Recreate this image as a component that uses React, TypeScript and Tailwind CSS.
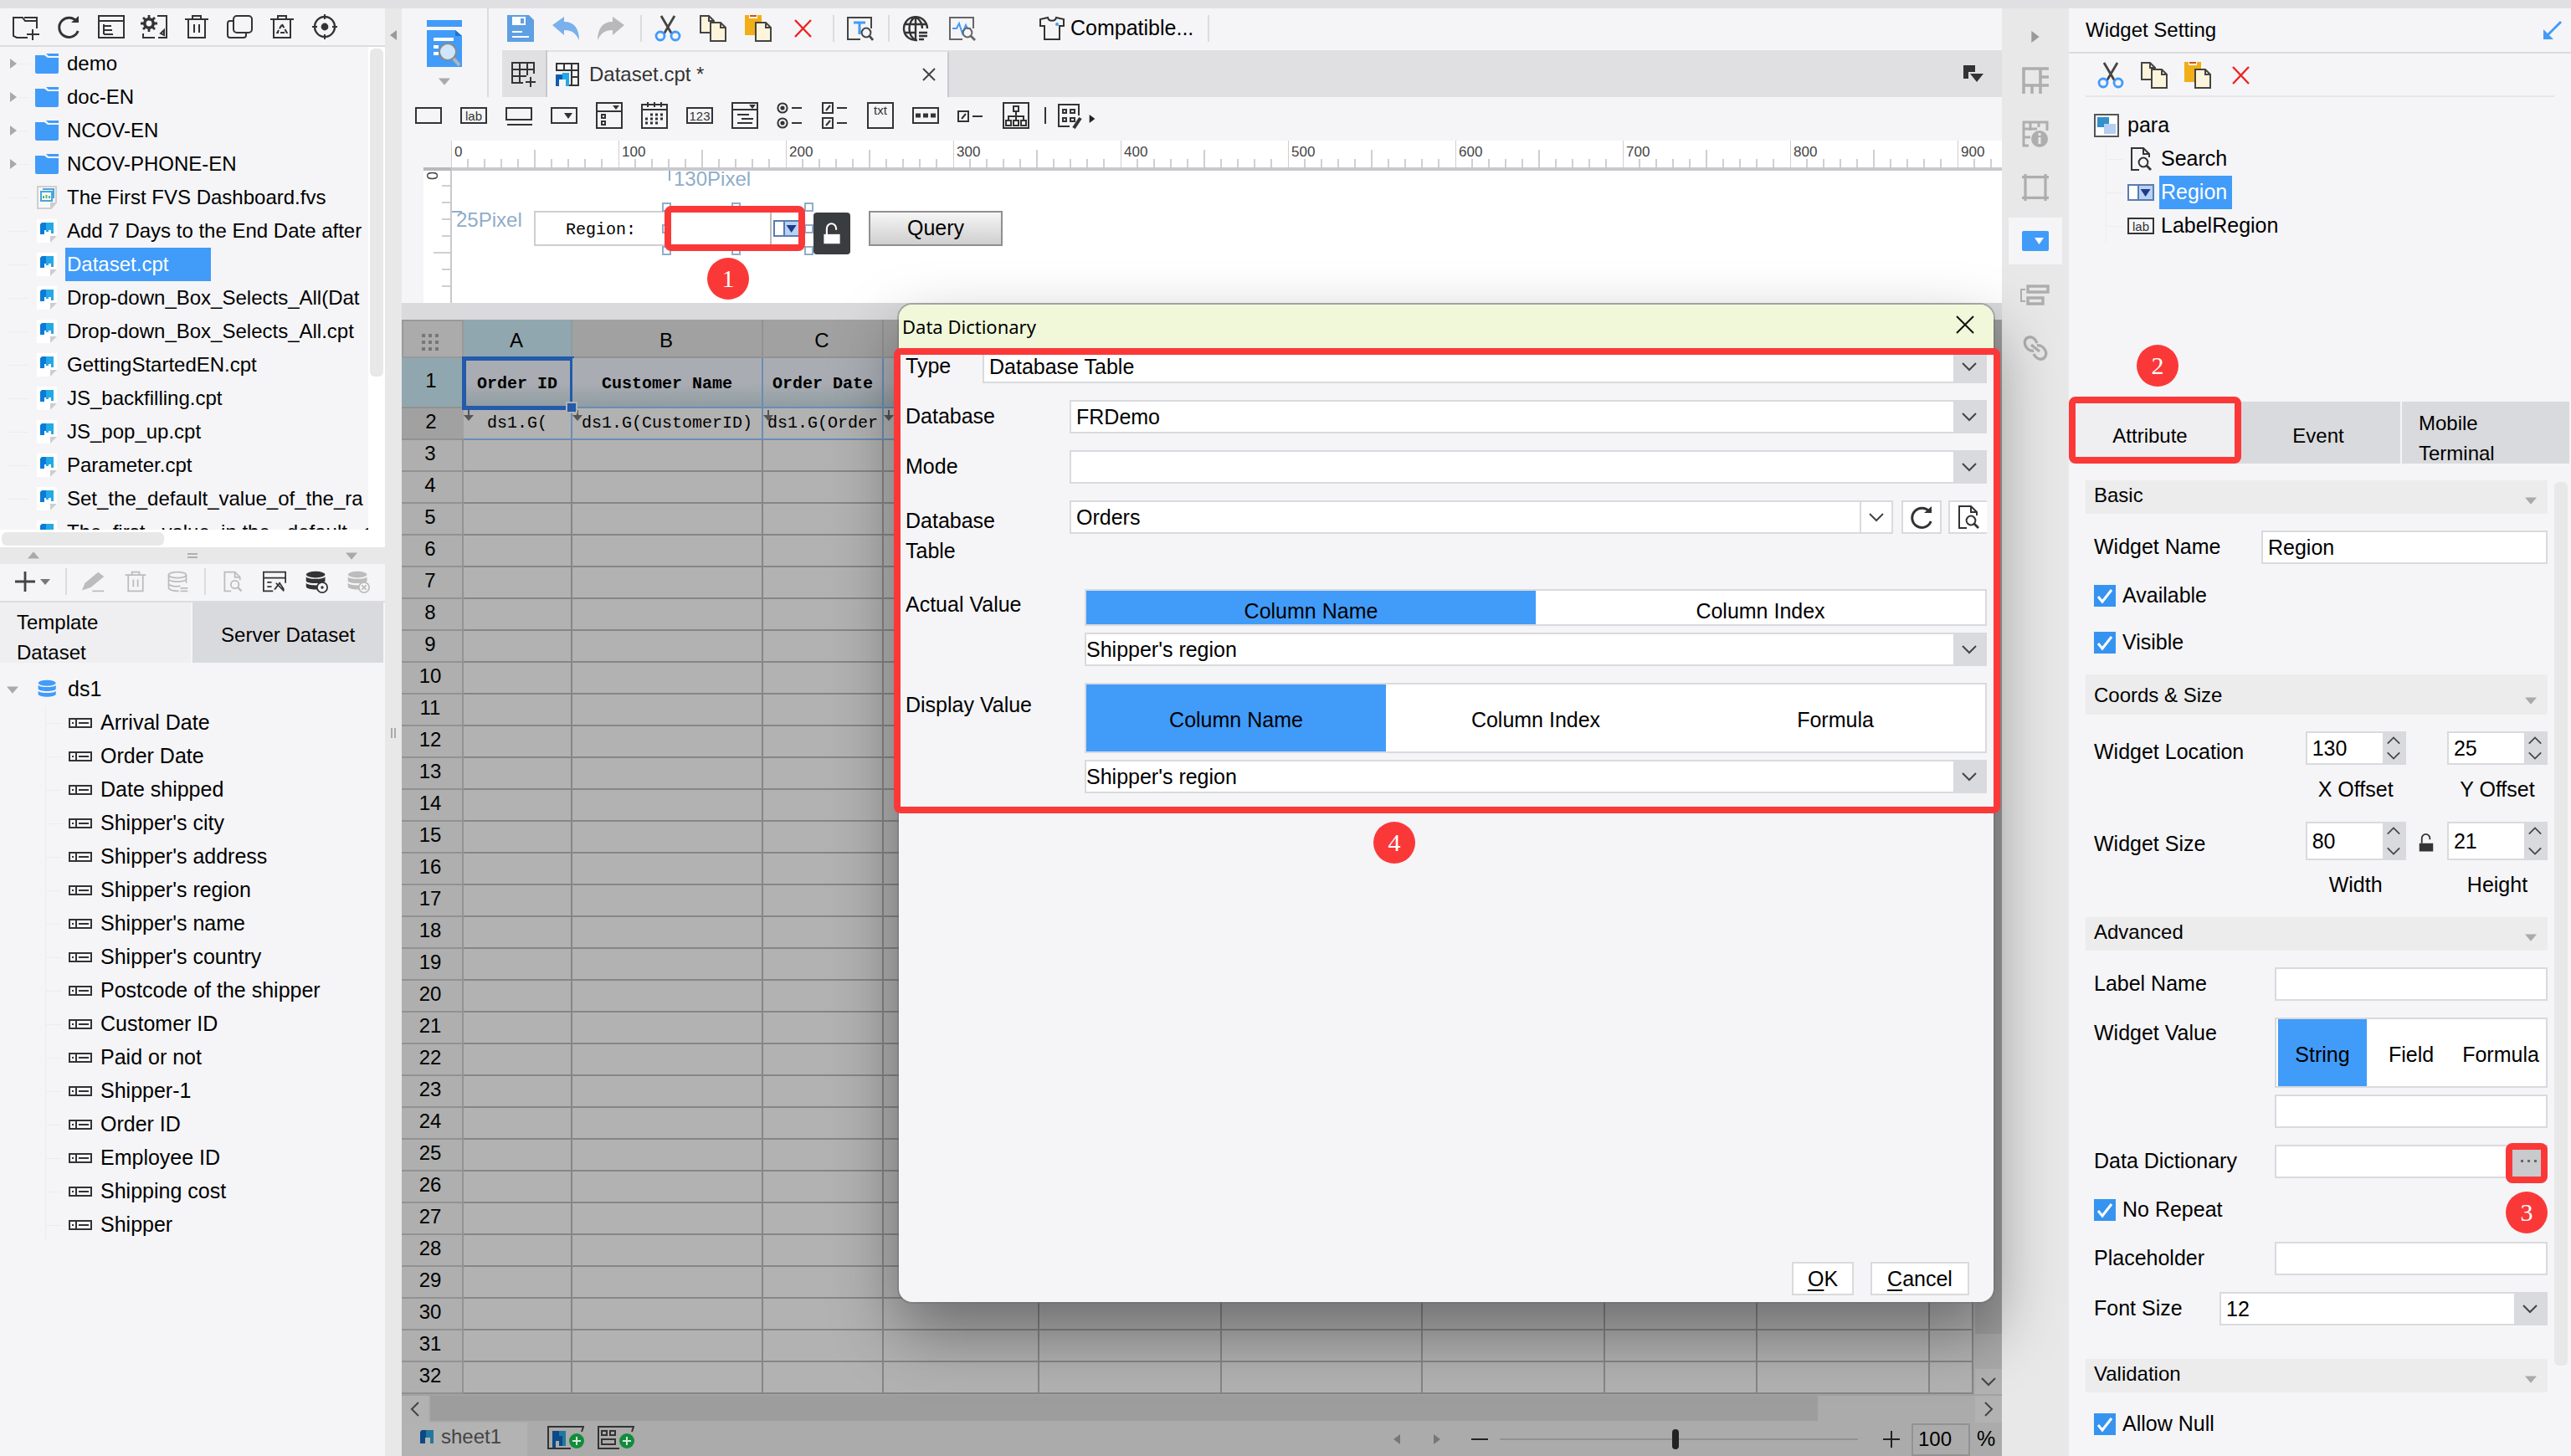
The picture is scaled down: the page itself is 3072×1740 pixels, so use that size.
import React, { ReactNode } from "react";

/* ---------- icons ---------- */

type IcoProps = { children: ReactNode; className?: string; vb?: string };

function Ico({ children, className = "w-8 h-8 text-[#333]", vb = "0 0 16 16" }: IcoProps) {
  return (
    <svg viewBox={vb} className={`${className} shrink-0`} fill="none" stroke="currentColor" strokeWidth="1" aria-hidden="true">
      {children}
    </svg>
  );
}

const fill = { fill: "currentColor", stroke: "none" };

const RefreshIcon = ({ className }: { className?: string }) => (
  <Ico className={className}>
    <path d="M13 5.2A5.8 5.8 0 1 0 13.6 10.5" strokeWidth="1.5" />
    <path d="M9.5 5.5h4.5V1.5z" {...fill} />
  </Ico>
);

const TrashIcon = ({ className, inner }: { className?: string; inner?: ReactNode }) => (
  <Ico className={className}>
    <path d="M1 3.5h14M5.5 3.5v-2h5v2M3 3.5v11h10v-11" />
    {inner ?? <path d="M6.5 6.5v5M9.5 6.5v5" />}
  </Ico>
);

const ScissorsIcon = () => (
  <Ico className="w-8 h-8">
    <path d="M4 .5 10.2 11M12 .5 5.800 11" stroke="#444" strokeWidth="1.4" />
    <circle cx="3.500" cy="12.500" r="2.500" stroke="#419bf9" strokeWidth="1.400" />
    <circle cx="12.500" cy="12.500" r="2.500" stroke="#419bf9" strokeWidth="1.400" />
  </Ico>
);

const CopyIcon = () => (
  <Ico className="w-8 h-8">
    <path d="M.5.5h5l3 3v7h-8z" fill="#fdf4dc" stroke="#444" />
    <path d="M5.500.5v3h3" stroke="#444" />
    <path d="M6.500 4.500h6l3 3v8h-9z" fill="#fdf4dc" stroke="#444" />
    <path d="M12.500 4.500v3h3" stroke="#444" />
  </Ico>
);

const PasteIcon = () => (
  <Ico className="w-8 h-8">
    <path d="M0 0h10v12H0z" fill="#f2ae16" stroke="none" />
    <path d="M2.500 0h5v2h-5z" fill="#fff" stroke="none" />
    <path d="M3 0h4v1H3z" fill="#c4561c" stroke="none" />
    <path d="M6.500 4.500h6l3 3v8h-9z" fill="#fdf4dc" stroke="#444" />
    <path d="M12.500 4.500v3h3" stroke="#444" />
  </Ico>
);

const DeleteIcon = () => (
  <Ico className="w-8 h-8 text-[#ee2222]">
    <path d="M3 3l9.500 10M12.500 3l-9.500 10" strokeWidth="1.200" />
  </Ico>
);

const PageSearchIcon = ({ className }: { className?: string }) => (
  <Ico className={className}>
    <path d="M7 14.500H2.500v-13h7l3.500 3.500v2M9.500 1.500v3.500H13" />
    <circle cx="9.500" cy="10" r="2.700" />
    <path d="M11.500 12l2.500 2.500" strokeWidth="1.400" />
  </Ico>
);

const LabIcon = ({ label = "lab" }: { label?: string }) => (
  <Ico>
    <path d="M.5 3.500h15v9H.5z" />
    <text x="8" y="10.800" textAnchor="middle" fontSize="7.500" fontFamily="Liberation Sans, sans-serif" {...fill}>{label}</text>
  </Ico>
);

const ComboIcon = () => (
  <Ico className="w-8 h-8">
    <path d="M.5 3.500h15v9H.5z" fill="#fff" stroke="#5b7bb0" />
    <path d="M6.500 4h8.500v8H6.500z" fill="#b7d3f3" stroke="none" />
    <path d="M6.500 3.500v9" stroke="#5b7bb0" />
    <path d="M7.800 6h6L10.800 10.500z" fill="#1f3a8a" stroke="none" />
  </Ico>
);

const UnlockIcon = ({ className }: { className?: string }) => (
  <Ico className={className}>
    <path d="M2.500 8.500h11v6.500h-11z" {...fill} />
    <path d="M4.500 8.500V4.500a3.200 3.200 0 0 1 6.400 0v1" strokeWidth="1.200" />
  </Ico>
);

const FolderIcon = () => (
  <svg viewBox="0 0 28 24" className="h-6 w-7 shrink-0" aria-hidden="true">
    <path d="M0 2h11l4 3h13v17a2 2 0 0 1-2 2H2a2 2 0 0 1-2-2z" fill="#419bf9" />
    <path d="M13 0h15v3H16z" fill="#419bf9" />
  </svg>
);

const CptIcon = () => (
  <svg viewBox="0 0 24 28" className="h-7 w-6 shrink-0" aria-hidden="true">
    <path d="M0 0h24v20l-8 8H0z" fill="#fff" />
    <path d="M16 20h8l-8 8z" fill="#cdcdcd" />
    <path d="M6 4h6v5h2v4H9v5H4V6z" fill="#0a7bd8" />
    <path d="M11 4h9v13h-3v-4h-3v2h-3V9z" fill="#25a9e6" />
  </svg>
);

const FvsIcon = () => (
  <svg viewBox="0 0 24 28" className="h-7 w-6 shrink-0" aria-hidden="true">
    <path d="M1 1h22v19l-6 7H1z" fill="#f8f8f8" stroke="#cfcfcf" strokeWidth="2" />
    <path d="M5 7h13v11H5zM7 4h13v11" fill="none" stroke="#4aa5de" strokeWidth="2" />
    <path d="M8 15v-3M11.500 15v-4M15 15v-3" stroke="#5fb560" strokeWidth="2" />
    <path d="M16 20h8l-8 8z" fill="#cdcdcd" />
  </svg>
);

const DbIcon = ({ className, mark }: { className?: string; mark?: ReactNode }) => (
  <Ico className={className}>
    <ellipse cx="7.500" cy="3.200" rx="6.500" ry="2.200" {...fill} />
    <path d="M1 4.700c1 2 12 2 13 0v3c-1 2-12 2-13 0zM1 9c1 2 12 2 13 0v2.500c-1 2.500-12 2.500-13 0z" {...fill} />
    {mark}
  </Ico>
);

const FieldIcon = () => (
  <svg viewBox="0 0 28 12" className="h-3 w-7 shrink-0" fill="none" stroke="#333" strokeWidth="2" aria-hidden="true">
    <path d="M1 1h26v10H1zM9 1v10M12 6h12M4 6h2" />
  </svg>
);

const Tri = ({ dir, className = "w-3 h-3 text-[#a9a9a9]" }: { dir: "l" | "r" | "u" | "d"; className?: string }) => {
  const d = { l: "M10 0v12L2 6z", r: "M2 0v12l8-6z", u: "M0 9h12L6 2z", d: "M0 3h12l-6 7z" }[dir];
  return (
    <svg viewBox="0 0 12 12" className={`${className} shrink-0`} fill="currentColor" aria-hidden="true">
      <path d={d} />
    </svg>
  );
};

const Chevron = ({ up, className = "w-5 h-5" }: { up?: boolean; className?: string }) => (
  <svg viewBox="0 0 20 20" className={`${className} shrink-0 text-[#444]`} fill="none" stroke="currentColor" strokeWidth="2" aria-hidden="true">
    <path d={up ? "M2 14l8-8 8 8" : "M2 6l8 8 8-8"} />
  </svg>
);

/* ---------- shared parts ---------- */

const Btn = ({ label, children, className = "" }: { label: string; children: ReactNode; className?: string }) => (
  <button type="button" aria-label={label} className={`flex shrink-0 items-center justify-center ${className}`}>
    {children}
  </button>
);

const Divider = ({ className = "" }: { className?: string }) => <span className={`h-8 w-0.5 shrink-0 bg-[#dcdcde] ${className}`} />;

const Badge = ({ n, className }: { n: number; className: string }) => (
  <span className={`absolute z-30 flex h-[50px] w-[50px] items-center justify-center rounded-full bg-[#fb3838] font-[Liberation_Serif,serif] text-[30px] leading-none text-white ${className}`}>
    {n}
  </span>
);

const RedBox = ({ className }: { className: string }) => (
  <span className={`pointer-events-none absolute z-20 rounded-lg border-8 border-[#fb3838] ${className}`} />
);

function Select({ id, value, pad = "pl-1.5", className = "", plain = false }: { id: string; value: string; pad?: string; className?: string; plain?: boolean }) {
  return (
    <span className={`flex h-10 min-w-0 border-2 border-[#d9dadd] bg-white ${className}`}>
      <select id={id} aria-label={id} defaultValue={value} className={`h-full min-w-0 flex-1 appearance-none bg-transparent outline-none ${pad}`}>
        <option>{value}</option>
      </select>
      <span className={`pointer-events-none flex w-[38px] shrink-0 items-center justify-center ${plain ? "border-l-2 border-[#d9dadd]" : "bg-[#d9dadd]"}`}>
        <Chevron />
      </span>
    </span>
  );
}

/* ---------- left column ---------- */

const files: [string, "dir" | "fvs" | "cpt"][] = [
  ["demo", "dir"],
  ["doc-EN", "dir"],
  ["NCOV-EN", "dir"],
  ["NCOV-PHONE-EN", "dir"],
  ["The First FVS Dashboard.fvs", "fvs"],
  ["Add 7 Days to the End Date after I", "cpt"],
  ["Dataset.cpt", "cpt"],
  ["Drop-down_Box_Selects_All(Dat", "cpt"],
  ["Drop-down_Box_Selects_All.cpt", "cpt"],
  ["GettingStartedEN.cpt", "cpt"],
  ["JS_backfilling.cpt", "cpt"],
  ["JS_pop_up.cpt", "cpt"],
  ["Parameter.cpt", "cpt"],
  ["Set_the_default_value_of_the_ra", "cpt"],
  ["The_first_ value_in the_ default_ s", "cpt"],
];

const fields = [
  "Arrival Date", "Order Date", "Date shipped", "Shipper's city", "Shipper's address", "Shipper's region",
  "Shipper's name", "Shipper's country", "Postcode of the shipper", "Customer ID", "Paid or not", "Shipper-1",
  "Order ID", "Employee ID", "Shipping cost", "Shipper",
];

function LeftColumn() {
  return (
    <aside className="flex w-[460px] shrink-0 flex-col bg-[#f5f5f7]">
      <div className="flex h-[46px] shrink-0 items-center gap-[19px] border-b-2 border-[#dcdcde] pl-[15px]">
        <Btn label="New folder">
          <Ico>
            <path d="M9 14.500H2.500l-2-1v-11h5.500l1.500 2h7V9M7 2.500h7.500v2M12 9.500v6.500M8.500 12.500H16" />
          </Ico>
        </Btn>
        <Btn label="Refresh"><RefreshIcon /></Btn>
        <Btn label="Template list">
          <Ico>
            <path d="M.5 1.500h15v13H.5zM.5 4.500h15M3.500 6.500v6M3.500 7.500H8M3.500 10h5M3.500 12.500H9" />
          </Ico>
        </Btn>
        <Btn label="Settings">
          <Ico>
            <circle cx="5" cy="6" r="2.600" strokeWidth="1.800" />
            <path d="M5 1v2M5 9v2M0 6h2M8 6h2M1.500 2.500l1.300 1.300M8.500 2.500L7.200 3.800M1.500 9.500l1.300-1.300M8.500 9.500L7.200 8.200" strokeWidth="1.400" />
            <path d="M10 1.500h5.500v13h-5M1.500 12v2.500h7M12 12l2-2v3z" />
          </Ico>
        </Btn>
        <Btn label="Delete"><TrashIcon /></Btn>
        <Btn label="Copy">
          <Ico>
            <rect x="4.500" y="1.500" width="11" height="10" rx="2" />
            <path d="M4 4.500H2.500a1.500 1.500 0 0 0-1.500 1.500v7a1.500 1.500 0 0 0 1.500 1.500h8a1.500 1.500 0 0 0 1.500-1.500v-1" />
          </Ico>
        </Btn>
        <Btn label="Recycle bin"><TrashIcon inner={<path d="M8 6.500l2.800 5H5.200z" strokeDasharray="2.500 1" />} /></Btn>
        <Btn label="Locate">
          <Ico>
            <circle cx="8" cy="8" r="6" strokeWidth="1.200" />
            <circle cx="8" cy="8" r="2.200" {...fill} />
            <path d="M8 .5v3M8 12.500v3M.5 8h3M12.500 8h3" />
          </Ico>
        </Btn>
      </div>

      <div className="flex h-[577px] shrink-0 text-[24px]">
        <ul className="min-w-0 flex-1 overflow-hidden">
          {files.map(([name, kind]) => (
            <li key={name} className="flex h-10 items-center whitespace-nowrap">
              <span className="flex w-[42px] shrink-0 items-center pl-2.5">
                {kind === "dir" && <Tri dir="r" />}
                <span className="h-px flex-1 bg-[#ececef]" />
                <span className="w-2" />
              </span>
              <span className="flex w-7 shrink-0 justify-center">
                {kind === "dir" ? <FolderIcon /> : kind === "fvs" ? <FvsIcon /> : <CptIcon />}
              </span>
              <span className={name === "Dataset.cpt" ? "ml-2 flex h-10 w-[174px] shrink-0 items-center bg-[#419bf9] pl-0.5 text-white" : "ml-2 pl-0.5"}>{name}</span>
            </li>
          ))}
        </ul>
        <div className="w-5 shrink-0 bg-white px-0.5 pt-0.5">
          <div className="h-[392px] rounded-md bg-[#e8e8e8]" />
        </div>
      </div>
      <div className="flex h-[21px] shrink-0 items-center bg-white pl-0.5">
        <div className="h-4 w-[194px] rounded-md bg-[#e8e8e8]" />
      </div>

      <div className="flex h-5 shrink-0 items-center justify-between bg-[#e8e8e8] px-[31px]">
        <Tri dir="u" className="h-3.5 w-[18px] text-[#a9a9a9]" />
        <span className="h-1.5 w-3 border-y-2 border-[#b0b0b0]" />
        <Tri dir="d" className="h-3.5 w-[18px] text-[#a9a9a9]" />
      </div>

      <div className="flex h-[46px] shrink-0 items-center gap-[22px] border-b-2 border-[#dcdcde] pb-0.5 pl-[14px]">
        <Btn label="Add dataset" className="gap-0.5">
          <Ico className="h-8 w-8 text-[#444]"><path d="M8 2v12M2 8h12" strokeWidth="1.400" /></Ico>
          <Tri dir="d" className="h-3 w-3 text-[#777]" />
        </Btn>
        <Divider className="-mx-1" />
        <Btn label="Edit">
          <Ico className="h-7 w-7 text-[#bcbcbc]"><path d="M0 14l2-5 9-7.500 4 3L6 12z" {...fill} /><path d="M7 14.500h8" /></Ico>
        </Btn>
        <Btn label="Remove"><TrashIcon className="h-7 w-7 text-[#bcbcbc]" /></Btn>
        <Btn label="Dataset">
          <Ico className="h-7 w-7 text-[#bcbcbc]">
            <ellipse cx="8" cy="3.500" rx="6" ry="2" />
            <path d="M2 3.500v9c1 2 5 2 7 2M14 3.500V9M2 6.500c1 2 11 2 12 0M2 9.500c1 2 6 2 8 1.500M10 12.500h5M10 14.500h5" />
          </Ico>
        </Btn>
        <Divider className="-mx-1" />
        <Btn label="Preview dataset"><PageSearchIcon className="h-7 w-7 text-[#bcbcbc]" /></Btn>
        <Btn label="Link dataset">
          <Ico className="h-7 w-7 text-[#333]">
            <path d="M7 14.500H.5v-13h15V9M.5 5.500h15M3 8.500h3M3 11.500h3M8 13.500l3.500-4.500 3 4.500M9 9l5.500 5.500" />
          </Ico>
        </Btn>
        <Btn label="Server data">
          <DbIcon className="h-7 w-7 text-[#333]" mark={<><circle cx="12" cy="12" r="3.500" fill="#f5f5f7" /><circle cx="12" cy="12" r="1" {...fill} /></>} />
        </Btn>
        <Btn label="Clear data">
          <DbIcon className="h-7 w-7 text-[#bcbcbc]" mark={<><circle cx="12" cy="12" r="3.500" fill="#f5f5f7" /><path d="M10.500 10.500l3 3M13.500 10.500l-3 3" /></>} />
        </Btn>
      </div>

      <div className="flex h-[72px] shrink-0 gap-0.5 pr-0.5 text-[24px]" role="tablist">
        <button type="button" role="tab" className="w-1/2 bg-[#efeff1] pl-5 pr-20 pt-1.5 text-left leading-9">Template Dataset</button>
        <button type="button" role="tab" className="w-1/2 bg-[#d9dadd] pt-1.5">Server Dataset</button>
      </div>

      <div className="pt-3">
        <div className="flex h-10 items-center">
          <span className="w-11 pl-2"><Tri dir="d" className="h-3.5 w-3.5 text-[#a9a9a9]" /></span>
          <DbIcon className="h-7 w-[26px] text-[#419bf9]" />
          <span className="pl-[11px]">ds1</span>
        </div>
        <ul className="ml-[54px] border-l border-[#ececef]">
          {fields.map((f) => (
            <li key={f} className="flex h-10 items-center whitespace-nowrap">
              <span className="mr-2 h-px w-[19px] bg-[#ececef]" />
              <FieldIcon />
              <span className="pl-2.5">{f}</span>
            </li>
          ))}
        </ul>
      </div>
    </aside>
  );
}

function Splitter() {
  return (
    <div className="flex w-5 shrink-0 flex-col items-center bg-[#e8e8e8] pt-6">
      <Tri dir="l" className="h-4 w-3 text-[#999]" />
      <span className="mt-[820px] h-3 w-1.5 border-x-2 border-[#aaa]" />
    </div>
  );
}

/* ---------- centre column ---------- */

function MainToolbar() {
  return (
    <div className="flex h-[50px] shrink-0 items-center pb-0.5 pl-1.5">
      <Btn label="Save">
        <Ico className="h-8 w-8"><path d="M0 0h13l3 3v13H0z" fill="#5f9fe3" stroke="none" /><path d="M3 1h8v5H3zM3 9.500h6v1H3zM3 12.500h10v1H3z" fill="#fff" stroke="none" /><path d="M8 2h2v3H8z" fill="#5f9fe3" stroke="none" /></Ico>
      </Btn>
      <Btn label="Undo" className="ml-[22px]">
        <Ico className="h-8 w-8 text-[#7ab0ec]"><path d="M0 6l7-5v3c6 0 9 4 9 11-2-4-4-6-9-6v3z" {...fill} /></Ico>
      </Btn>
      <Btn label="Redo" className="ml-[22px]">
        <Ico className="h-8 w-8 text-[#b9b9b9]"><path d="M16 6L9 1v3C3 4 0 8 0 15c2-4 4-6 9-6v3z" {...fill} /></Ico>
      </Btn>
      <Divider className="ml-[19px]" />
      <Btn label="Cut" className="ml-[15px]"><ScissorsIcon /></Btn>
      <Btn label="Copy" className="ml-[22px]"><CopyIcon /></Btn>
      <Btn label="Paste" className="ml-[22px]"><PasteIcon /></Btn>
      <Btn label="Delete" className="ml-[22px]"><DeleteIcon /></Btn>
      <Divider className="ml-[19px]" />
      <Btn label="Find text" className="ml-[15px]">
        <Ico className="h-8 w-8 text-[#444]">
          <path d="M8 14.500H.5v-13h14V8" />
          <path d="M4 4.500h7M7.500 4.500v7" stroke="#419bf9" strokeWidth="1.500" />
          <circle cx="11.500" cy="10.500" r="2.700" fill="#f5f5f7" />
          <path d="M13.500 12.500l2 2.500" strokeWidth="1.400" />
        </Ico>
      </Btn>
      <Divider className="ml-[17px]" />
      <Btn label="Language" className="ml-[15px]">
        <Ico>
          <path d="M9 15A7 7 0 1 1 15 8M8 1C3 4 3 12 8 15M8 1c3 2 4 4 4 7M8 1v14M1.500 5.500h13M1.500 10.500H8M10 10.500h5M10 12.500h5M10 14.500h3" strokeWidth="1.200" />
        </Ico>
      </Btn>
      <Btn label="Performance" className="ml-6">
        <Ico className="h-8 w-8 text-[#666]">
          <path d="M8 14.500H.5v-13h14V8" />
          <path d="M2 8h2.500L6 5l2 6 2-5 1 2h2" stroke="#419bf9" />
          <circle cx="11" cy="10.500" r="2.700" />
          <path d="M13 12.500l2.500 2.500" strokeWidth="1.400" />
        </Ico>
      </Btn>
      <button type="button" className="ml-[75px] flex items-center gap-1.5">
        <Ico>
          <path d="M5.500 1.500L1 2.500v4h2.500v8h9v-8H15v-4l-4.500-1C10 4 6 4 5.500 1.500z" />
          <circle cx="11" cy="5.500" r="1" fill="#419bf9" stroke="none" />
        </Ico>
        Compatible...
      </button>
      <Divider className="ml-[17px]" />
    </div>
  );
}

const widgetIcons: [string, ReactNode][] = [
  ["Text", <Ico><path d="M.5 3.500h15v9H.5z" /></Ico>],
  ["Label", <LabIcon />],
  ["Button", <Ico><path d="M.5 3.500h15v7H.5zM1 13.500h15" /></Ico>],
  ["Drop-down box", <Ico><path d="M.5 3.500h15v9H.5z" /><path d="M8 6.500h5L10.500 10z" {...fill} /></Ico>],
  ["Drop-down checkbox", <Ico><path d="M.5.5h15v15H.5zM.5 5.500h15M3.500 7.500h2v2h-2zM3.500 11.500h2v2h-2z" /><path d="M10 2h4l-2 2.500z" {...fill} /></Ico>],
  ["Date", <Ico><path d="M.5 1.500h15v14H.5zM.5 4.500h15M4 0v3M8 0v3M12 0v3" /><path d="M5.500 7.500h8M2.500 10h11M2.500 12.500h8" strokeWidth="1.500" strokeDasharray="1.500 1.500" /></Ico>],
  ["Number", <LabIcon label="123" />],
  ["Drop-down tree", <Ico><path d="M.5.5h15v15H.5zM.5 4.500h15M3.500 7.500h7M6 10h7M3.500 12.500h9" /><path d="M10.500 1.500h4l-2 2.500z" {...fill} /></Ico>],
  ["Radio group", <Ico><circle cx="3.500" cy="3.500" r="2.800" /><circle cx="3.500" cy="12.500" r="2.800" /><circle cx="3.500" cy="3.500" r="1.300" {...fill} /><circle cx="3.500" cy="12.500" r="1.300" {...fill} /><path d="M9 3.500h6M9 12.500h6" /></Ico>],
  ["Checkbox group", <Ico><path d="M.5.500h6v6h-6zM.5 9.500h6v6h-6zM9 3.500h6M9 12.500h6M2.500 5l2.500-3M2.500 14l2.500-3" /></Ico>],
  ["Text area", <Ico><path d="M.5.5h15v15H.5z" /><text x="8" y="7.500" textAnchor="middle" fontSize="7.500" fontFamily="Liberation Sans, sans-serif" {...fill}>txt</text></Ico>],
  ["Password", <Ico><path d="M.5 3.500h15v9H.5z" /><path d="M2 8h12" strokeWidth="2.500" strokeDasharray="3 1.500" /></Ico>],
  ["Checkbox", <Ico><path d="M.5 5.500h6v6h-6zM9 8.500h6M2.500 10l2.500-3" /></Ico>],
  ["Tree", <Ico><path d="M.5.5h15v15H.5zM6.500 2.500h3v3h-3zM8 5.500V11M3.500 11V8.500h9V11M2 11h3v3H2zM6.500 11h3v3h-3zM11 11h3v3h-3z" /></Ico>],
];

function Ruler() {
  return (
    <div className="flex h-9 shrink-0 pl-[26px]">
      <div className="w-[33px] shrink-0 border-b-4 border-[#b9b9bd]" />
      <div className="flex min-w-0 flex-1 overflow-hidden border-b-4 border-[#c9c9cd] bg-white">
        {[0, 100, 200, 300, 400, 500, 600, 700, 800, 900].map((n) => (
          <div key={n} className="relative h-8 w-[200px] shrink-0 pl-1 text-[17px] leading-7 text-[#444]">
            <svg viewBox="0 0 200 32" className="absolute inset-0 h-8 w-[200px]" stroke="#cfcfd3" strokeWidth="2" aria-hidden="true">
              <path d="M0 0v32M20 22v10M40 22v10M60 22v10M80 22v10M100 11v21M120 22v10M140 22v10M160 22v10M180 22v10" />
            </svg>
            <span className="relative">{n}</span>
          </div>
        ))}
      </div>
    </div>
  );
}

const handles = [
  "left-[251px] top-[38px]", "left-[334px] top-[38px]", "left-[421px] top-[38px]",
  "left-[251px] top-[64px]", "left-[421px] top-[64px]",
  "left-[251px] top-[90px]", "left-[334px] top-[90px]", "left-[421px] top-[90px]",
];

function ParamCanvas() {
  return (
    <div className="flex h-[158px] shrink-0 pl-[26px]">
      <div className="w-8 shrink-0 bg-white">
        <svg viewBox="0 0 32 158" className="h-[158px] w-8" stroke="#cfcfd3" strokeWidth="2" aria-hidden="true">
          <path d="M22 18h12M22 38h12M22 58h12M22 78h12M12 98h22M22 118h12M22 138h12" />
          <text x="-11" y="17" transform="rotate(-90)" fontSize="18" fill="#444" stroke="none" fontFamily="Liberation Sans, sans-serif">0</text>
        </svg>
      </div>
      {/* free canvas: children keep their own coordinates */}
      <div className="relative min-w-0 flex-1 border-l-2 border-[#c9c9cd] bg-white">
        <span className="absolute left-[259px] top-0 h-3 w-0.5 bg-[#8fadc9]" />
        <span className="absolute left-[265px] top-[-8px] text-[24px] text-[#8fadc9]">130Pixel</span>
        <span className="absolute left-0 top-12 h-0.5 w-3 bg-[#8fadc9]" />
        <span className="absolute left-[5px] top-[41px] text-[24px] text-[#8fadc9]">25Pixel</span>
        <label htmlFor="region" className="absolute left-[98px] top-12 flex h-[42px] w-[160px] items-center justify-center border-2 border-[#cfcfcf] pt-1 font-[Liberation_Mono,monospace] text-[20px]">Region:</label>
        {handles.map((h) => (
          <span key={h} className={`absolute h-[11px] w-[11px] border-2 border-[#8fadc9] bg-white ${h}`} />
        ))}
        <div className="absolute left-[258px] top-12 flex h-[42px] w-[160px] items-center bg-white">
          <input id="region" className="h-full min-w-0 flex-1 border-r-2 border-[#bbb] outline-none" />
          <span className="flex w-9 justify-center"><ComboIcon /></span>
        </div>
        <RedBox className="left-[254px] top-[42px] h-[54px] w-[168px]" />
        <Btn label="Unlock size" className="absolute left-[432px] top-[50px] h-[50px] w-[44px] rounded bg-[#3a3d40]">
          <UnlockIcon className="h-8 w-7 text-white" />
        </Btn>
        <button type="button" className="absolute left-[498px] top-12 h-[42px] w-[160px] border-2 border-[#8f8f8f] bg-linear-to-b from-[#f6f6f6] to-[#cfcfcf]">Query</button>
        <Badge n={1} className="left-[305px] top-[104px]" />
      </div>
    </div>
  );
}

const columns = ["A", "B", "C", "", "", "", "", "", "", ""];
const rows = Array.from({ length: 30 }, (_, i) => i + 3);

const FillArrow = () => (
  <svg viewBox="0 0 12 14" className="absolute left-0 top-0.5 h-3.5 w-3 text-[#555]" fill="currentColor" aria-hidden="true">
    <path d="M5 0h2v6h5l-6 7-6-7h5z" />
  </svg>
);

function Sheet() {
  const blue = "border-b-2 border-r-2 border-[#6b8cb5]";
  const head = [["Order ID", "ds1.G("], ["Customer Name", "ds1.G(CustomerID)"], ["Order Date", "ds1.G(Order"]];
  return (
    <div className="flex min-h-0 flex-1 overflow-hidden">
      <table className="min-w-0 flex-1 table-fixed border-separate border-spacing-0 bg-[#b2b2b2] text-[24px] leading-7">
        <colgroup>
          <col className="w-[74px]" />
          <col className="w-[130px]" />
          <col className="w-[228px]" />
          <col className="w-[144px]" />
          <col className="w-[186px]" />
          <col className="w-[218px]" />
          <col className="w-[240px]" />
          <col className="w-[218px]" />
          <col className="w-[182px]" />
          <col className="w-[206px]" />
          <col />
        </colgroup>
        <thead>
          <tr>
            <th className="h-[46px] border-2 border-[#999] bg-[#ababab] p-0">
              <svg viewBox="0 0 20 20" className="ml-[22px] mt-2 h-5 w-5" stroke="#777" strokeWidth="4" strokeDasharray="4 4" aria-hidden="true">
                <path d="M0 2h20M0 10h20M0 18h20" />
              </svg>
            </th>
            {columns.map((c, i) => (
              <th key={i} scope="col" className={`h-[46px] border-b-2 border-r-2 p-0 pr-0.5 pt-1.5 font-normal ${i === 0 ? "border-[#8b9da4] bg-[#91a7af]" : "border-[#929292] bg-[#a1a1a1]"}`}>{c}</th>
            ))}
          </tr>
        </thead>
        <tbody>
          <tr className="font-[Liberation_Mono,monospace] text-[20px] font-bold">
            <th scope="row" className="h-[60px] border-b-2 border-[#929292] bg-[#91a7af] p-0 pb-1 pr-1 font-[Liberation_Sans,sans-serif] text-[24px] font-normal">1</th>
            {columns.map((c, i) => (
              <td key={i} className={`relative overflow-visible whitespace-nowrap bg-linear-to-b from-[#a9adb3] from-50% to-[#909da2] p-0 pt-1 text-center ${blue}`}>
                {head[i]?.[0]}
                {i === 0 && (
                  <>
                    <span className="absolute -bottom-1 -left-0.5 -right-1 -top-0.5 border-[5px] border-[#235aab]" />
                    <span className="absolute -bottom-1.5 -right-1.5 z-10 h-2.5 w-2.5 bg-[#235aab] outline-2 outline-[#b2b2b2]" />
                  </>
                )}
              </td>
            ))}
          </tr>
          <tr className="font-[Liberation_Mono,monospace] text-[20px]">
            <th scope="row" className="h-[38px] border-b-2 border-[#929292] bg-[#a1a1a1] p-0 pb-1 pr-1 font-[Liberation_Sans,sans-serif] text-[24px] font-normal">2</th>
            {columns.map((c, i) => (
              <td key={i} className={`relative whitespace-nowrap p-0 text-center ${blue}`}>
                <FillArrow />
                {head[i]?.[1]}
              </td>
            ))}
          </tr>
          {rows.map((r) => (
            <tr key={r}>
              <th scope="row" className="h-[38px] border-b-2 border-r-2 border-[#929292] bg-[#afafaf] p-0 pb-1 pr-1 font-normal">{r}</th>
              {columns.map((c, i) => (
                <td key={i} className="border-b-2 border-r-2 border-[#868686] p-0" />
              ))}
            </tr>
          ))}
        </tbody>
      </table>
      <div className="flex w-[34px] shrink-0 flex-col justify-between bg-[#a9a9a9] pl-0.5">
        <div className="h-[1212px] bg-[#9d9d9d]" />
        <Btn label="Scroll down" className="h-[30px] bg-[#b2b2b2]"><Chevron /></Btn>
      </div>
    </div>
  );
}

function SheetFooter() {
  return (
    <div className="shrink-0 bg-[#ababab]">
      <div className="flex h-[34px] items-stretch border-t-2 border-[#a2a2a2]">
        <Btn label="Scroll left" className="w-8 bg-[#b2b2b2]"><Chevron className="h-5 w-5 rotate-90" /></Btn>
        <div className="mb-0.5 ml-0.5 mr-[188px] flex-1 bg-[#9d9d9d]" />
        <Btn label="Scroll right" className="w-8 bg-[#b2b2b2]"><Chevron className="h-5 w-5 -rotate-90" /></Btn>
      </div>
      <div className="flex h-10 items-center">
        <button type="button" className="flex h-10 w-[150px] items-center gap-[9px] bg-[#b3b3b3] pb-1.5 pl-[22px] text-[24px] text-[#444]">
          <svg viewBox="0 0 16 16" className="h-4 w-4" aria-hidden="true">
            <path d="M2 0h6v9H6v7H0V2z" fill="#0b4a86" />
            <path d="M7 0h9v16h-4V9H7z" fill="#25769f" />
          </svg>
          sheet1
        </button>
        <Btn label="Add sheet" className="ml-6 pb-1">
          <Ico className="h-7 w-11 text-[#333]" vb="0 0 22 14">
            <path d="M14 13.500H.5V.5h21l-1 3" />
            <path d="M3 3h4v3h2v6H7V9H5v4H3z" fill="#0b4a86" stroke="none" />
            <path d="M7 3h4v9H9V6H7z" fill="#25769f" stroke="none" />
            <circle cx="17.500" cy="9" r="4.500" fill="#128c3c" stroke="none" />
            <path d="M17.500 6.500v5M15 9h5" stroke="#d5e8d9" />
          </Ico>
        </Btn>
        <Btn label="Add polymorphic sheet" className="ml-4 pb-1">
          <Ico className="h-7 w-11 text-[#333]" vb="0 0 22 14">
            <path d="M13 13.500H.5V.5h21l-1 3M2.500 3h3v2.500h-3zM7.500 3h3v2.500h-3zM2.500 8h8v3h-8z" />
            <circle cx="17.500" cy="9" r="4.500" fill="#128c3c" stroke="none" />
            <path d="M17.500 6.500v5M15 9h5" stroke="#d5e8d9" />
          </Ico>
        </Btn>
        <div className="ml-auto flex items-center">
          <Btn label="Previous sheet"><Tri dir="l" className="h-4 w-3 text-[#777]" /></Btn>
          <Btn label="Next sheet" className="ml-9"><Tri dir="r" className="h-4 w-3 text-[#777]" /></Btn>
          <Btn label="Zoom out" className="ml-[33px] h-6 w-6"><span className="h-0.5 w-5 bg-[#222]" /></Btn>
          <input
            type="range"
            aria-label="Zoom"
            defaultValue={49}
            className="ml-3 h-6 w-[428px] appearance-none bg-transparent [&::-webkit-slider-runnable-track]:h-0.5 [&::-webkit-slider-runnable-track]:bg-[#929292] [&::-webkit-slider-thumb]:-mt-[11px] [&::-webkit-slider-thumb]:h-6 [&::-webkit-slider-thumb]:w-2 [&::-webkit-slider-thumb]:appearance-none [&::-webkit-slider-thumb]:rounded-sm [&::-webkit-slider-thumb]:bg-[#222]"
          />
          <Btn label="Zoom in" className="ml-7 h-6 w-6">
            <Ico className="h-6 w-6 text-[#222]" vb="0 0 24 24"><path d="M12 2v20M2 12h20" strokeWidth="2" /></Ico>
          </Btn>
          <input aria-label="Zoom percent" defaultValue="100" className="ml-3 h-[39px] w-[70px] border-2 border-[#929292] bg-[#ababab] pl-1.5 text-[24px] outline-none" />
          <span className="w-[38px] pl-2">%</span>
        </div>
      </div>
    </div>
  );
}

/* ---------- dialog ---------- */

function Segments({ items, className }: { items: string[]; className: string }) {
  return (
    <div className={`flex border-2 border-[#d9dadd] bg-white ${className}`}>
      {items.map((t, i) => (
        <button key={t} type="button" aria-pressed={i === 0} className={`flex-1 pt-1.5 ${i === 0 ? "bg-[#419bf9]" : ""}`}>{t}</button>
      ))}
    </div>
  );
}

function Dialog() {
  return (
    <section
      role="dialog"
      aria-label="Data Dictionary"
      className="absolute bottom-[184px] left-[594px] right-[10px] top-[354px] z-10 flex flex-col rounded-2xl bg-[#f5f5f7] shadow-[0_0_0_2px_rgba(110,110,110,0.45),0_34px_80px_rgba(0,0,0,0.4)]"
    >
      <header className="flex h-[52px] shrink-0 items-center justify-between rounded-t-2xl bg-[#f1f8d9] pl-1 pr-[22px]">
        <h2 className="font-[Noto_Sans,sans-serif] text-[22px]">Data Dictionary</h2>
        <Btn label="Close" className="pb-1">
          <Ico className="h-6 w-6 text-[#111]" vb="0 0 24 24"><path d="M2 2l20 20M22 2L2 22" strokeWidth="2" /></Ico>
        </Btn>
      </header>

      <div className="flex flex-col gap-5 pl-2 pr-2 pt-0.5">
        <div className="flex items-center">
          <label htmlFor="Type" className="w-[92px] shrink-0">Type</label>
          <Select id="Type" value="Database Table" className="flex-1" />
        </div>
        <div className="flex items-center">
          <label htmlFor="Database" className="w-[196px] shrink-0">Database</label>
          <Select id="Database" value="FRDemo" className="flex-1" />
        </div>
        <div className="flex items-center">
          <label htmlFor="Mode" className="w-[196px] shrink-0">Mode</label>
          <Select id="Mode" value="" className="flex-1" />
        </div>
        <div className="flex h-[86px] items-start">
          <label htmlFor="Database table" className="w-[196px] shrink-0 pr-20 pt-1.5 leading-9">Database Table</label>
          <Select id="Database table" value="Orders" plain className="flex-1" />
          <Btn label="Refresh tables" className="ml-2.5 h-10 w-12 border-2 border-[#d9dadd] bg-white"><RefreshIcon /></Btn>
          <Btn label="Preview table" className="ml-2 h-10 w-[46px] border-y-2 border-l-2 border-[#d9dadd] bg-white"><PageSearchIcon /></Btn>
        </div>
        <div className="flex items-start">
          <label htmlFor="Actual value" className="w-[214px] shrink-0 leading-9">Actual Value</label>
          <div className="flex flex-1 flex-col gap-2">
            <Segments items={["Column Name", "Column Index"]} className="h-11" />
            <Select id="Actual value" value="Shipper's region" pad="pl-0" />
          </div>
        </div>
        <div className="flex items-start">
          <label htmlFor="Display value" className="w-[214px] shrink-0 pt-2 leading-9">Display Value</label>
          <div className="flex flex-1 flex-col gap-2">
            <Segments items={["Column Name", "Column Index", "Formula"]} className="h-[84px]" />
            <Select id="Display value" value="Shipper's region" pad="pl-0" />
          </div>
        </div>
      </div>

      <footer className="mt-auto flex justify-end gap-5 pb-2 pr-[29px]">
        <button type="button" className="h-10 w-[74px] border-2 border-[#d9dadd] bg-white"><span className="underline underline-offset-4">O</span>K</button>
        <button type="button" className="h-10 w-[118px] border-2 border-[#d9dadd] bg-white"><span className="underline underline-offset-4">C</span>ancel</button>
      </footer>

      <RedBox className="-left-1.5 -right-2 top-[52px] h-[556px]" />
      <Badge n={4} className="left-[567px] top-[618px]" />
    </section>
  );
}

function Centre() {
  return (
    <main className="relative z-10 flex min-w-0 flex-1 flex-col bg-[#f5f5f7]">
      <div className="flex h-[106px] shrink-0">
        <div className="flex w-[104px] shrink-0 flex-col items-center border-r-2 border-[#dcdcde] pt-3.5">
          <Btn label="Preview">
            <svg viewBox="0 0 42 56" className="h-14 w-[42px]" aria-hidden="true">
              <path d="M0 0h42v8H0zM0 12h34l8 7v37H0z" fill="#419bf9" />
              <path d="M34 12l8 7h-8z" fill="#1f74cf" />
              <path d="M8 21h24v4H8zM8 30h6v4H8zM8 38h6v4H8z" fill="#fff" />
              <circle cx="25" cy="38" r="10" fill="#cfe6fb" stroke="#8a8a8a" strokeWidth="2" />
              <path d="M32 46l7 8" stroke="#b5b5b5" strokeWidth="4" />
            </svg>
          </Btn>
          <Tri dir="d" className="mt-2.5 h-3.5 w-3.5 text-[#aaa]" />
        </div>
        <div className="flex min-w-0 flex-1 flex-col pl-4">
          <MainToolbar />
          <div className="flex flex-1 bg-[#e0e0e2]">
            <Btn label="New report" className="w-[54px] border-r-2 border-[#c9c9cd] pr-0.5">
              <Ico className="h-8 w-8 text-[#333]"><path d="M8 13.500H1.500v-12h13V8M1.500 5.500h13M1.500 9.500H10M6 1.500v12M10.500 1.500V9M12.500 10v6M9.500 13h6" /></Ico>
            </Btn>
            <div className="mt-0.5 flex w-[480px] items-center border-r-2 border-[#c9c9cd] bg-[#f5f5f7] pl-2 pr-3 text-[24px] text-[#333]">
              <Ico className="h-8 w-8 text-[#333]">
                <path d="M1.500 6V1.500h13v13H9M1.500 5.500h13M10 9.500h4.500M6 1.500V6M10.500 1.500v13" />
                <path d="M1 8h4v3H3v4H1z" fill="#0b5fb0" stroke="none" />
                <path d="M5 7h4v8H7v-4H5z" fill="#25a9e6" stroke="none" />
              </Ico>
              <span className="pl-2.5">Dataset.cpt *</span>
              <Btn label="Close tab" className="ml-auto">
                <Ico className="h-5 w-5 text-[#444]" vb="0 0 20 20"><path d="M3 3l14 14M17 3L3 17" strokeWidth="2" /></Ico>
              </Btn>
            </div>
            <Btn label="Open tabs" className="ml-auto mr-[22px]">
              <Ico className="h-5 w-6 text-[#333]" vb="0 0 24 20">
                <path d="M0 0h14v8H6v8H0zM8 10h16l-8 10z" {...fill} />
              </Ico>
            </Btn>
          </div>
        </div>
      </div>

      <div className="flex h-[52px] shrink-0 items-center gap-[22px] pb-2 pl-4">
        {widgetIcons.map(([label, icon]) => (
          <Btn key={label} label={label}>{icon}</Btn>
        ))}
        <span className="-ml-1 h-5 w-0.5 bg-[#333]" />
        <Btn label="More widgets" className="-ml-2.5 gap-1.5">
          <Ico><path d="M8 14.500H1.500v-13h12V8M4 4.500h2v2H4zM4 9.500h2v2H4zM8.500 4.500h2.500v2H8.500zM8.500 9.500h2.500v2H8.500z" /><path d="M14.500 9.500l-4 6" strokeWidth="2" /></Ico>
          <Tri dir="r" className="mt-2 h-3.5 w-2.5 text-[#222]" />
        </Btn>
      </div>

      <Ruler />
      <ParamCanvas />
      <div className="h-5 shrink-0 bg-[#dadadc]" />
      <Sheet />
      <SheetFooter />
      <Dialog />
    </main>
  );
}

/* ---------- right columns ---------- */

function SideTabs() {
  const gray = "w-8 h-8 text-[#aeaeae]";
  return (
    <nav className="flex w-20 shrink-0 flex-col items-center bg-[#e8e8e8]">
      <Btn label="Collapse panel" className="h-[54px] pt-3.5"><Tri dir="r" className="h-[18px] w-3.5 text-[#999]" /></Btn>
      <Btn label="Cell element" className="h-16 w-16">
        <Ico className={gray}><path d="M1 16V1h15M1 11h15M11 1v15M6 11v5M11 6h5" strokeWidth="1.800" /></Ico>
      </Btn>
      <Btn label="Cell attribute" className="h-16 w-16">
        <Ico className={gray}><path d="M4 15H1V1h14v5M1 5h8M5 1v5M10 1v3M1 10h4" strokeWidth="1.500" /><circle cx="10.500" cy="11" r="5" {...fill} /><path d="M10.500 7.500v1.500M10.500 10v4" stroke="#e8e8e8" strokeWidth="1.500" /></Ico>
      </Btn>
      <Btn label="Floating element" className="h-16 w-16">
        <Ico className={gray}><path d="M2 0v16M14 0v16M0 1.800h16M0 14.200h16" strokeWidth="1.600" /></Ico>
      </Btn>
      <Btn label="Widget setting" className="my-1 h-14 w-16 bg-[#f5f5f7]">
        <svg viewBox="0 0 32 24" className="h-6 w-8" aria-hidden="true"><rect width="32" height="24" rx="2" fill="#419bf9" /><path d="M15 8h11l-5.500 8z" fill="#fff" /></svg>
      </Btn>
      <Btn label="Condition attribute" className="h-16 w-16">
        <Ico className="h-8 w-9 text-[#aeaeae]" vb="0 0 18 16"><path d="M4.500 3h12v3.500h-12zM4.500 10h9v3.500h-9z" strokeWidth="1.700" /><path d="M3 5H.5v7H3" /></Ico>
      </Btn>
      <Btn label="Hyperlink" className="h-16 w-16">
        <Ico className={gray}><path d="M7 9.500C5 10 3 8.500 2 6.500 1 4 2 2 4 1.500s4 1 5 3.500M9 6.500c2-.5 4 1 5 3s0 4.500-2 5-4-1-5-3M5.500 6l5 4" strokeWidth="1.700" /></Ico>
      </Btn>
    </nav>
  );
}

const Section = ({ title, className = "h-10 pb-1" }: { title: string; className?: string }) => (
  <button type="button" aria-expanded="true" className={`flex w-full shrink-0 items-center justify-between bg-[#ececec] pl-2.5 pr-3 text-left text-[24px] ${className}`}>
    <span>{title}</span>
    <Tri dir="d" className="mt-3 h-3.5 w-4 text-[#aaa]" />
  </button>
);

const Check = ({ label }: { label: string }) => (
  <label className="flex h-9 items-center gap-2 pl-2.5">
    <span className="grid">
      <input type="checkbox" defaultChecked className="h-[26px] w-[26px] appearance-none bg-[#3693f0] [grid-area:1/1]" />
      <svg viewBox="0 0 26 26" className="pointer-events-none h-[26px] w-[26px] [grid-area:1/1]" fill="none" stroke="#fff" strokeWidth="3" aria-hidden="true">
        <path d="M5 14l5 6L21 6" />
      </svg>
    </span>
    {label}
  </label>
);

const inputCls = "h-10 min-w-0 flex-1 border-2 border-[#d9dadd] bg-white px-1.5 outline-none";

const Spin = ({ label, value, className = "h-10" }: { label: string; value: string; className?: string }) => (
  <label className="flex w-[120px] shrink-0 flex-col items-center gap-2">
    <span className={`flex w-full border-2 border-[#d9dadd] ${className}`}>
      <input defaultValue={value} className="h-full min-w-0 flex-1 bg-white pl-1.5 outline-none" />
      <span className="flex w-[26px] shrink-0 flex-col items-center justify-between bg-[#d9dadd]">
        <Chevron up className="h-[18px] w-5" />
        <Chevron className="h-[18px] w-5" />
      </span>
    </span>
    <span className="flex h-10 items-center pt-1">{label}</span>
  </label>
);

function RightPanel() {
  return (
    <aside className="relative z-20 flex w-[600px] shrink-0 flex-col bg-[#f5f5f7]">
      <div className="flex h-[54px] shrink-0 items-center justify-between border-b-2 border-[#dcdcde] pl-5 pr-2.5 text-[24px]">
        <h2>Widget Setting</h2>
        <Btn label="Pop out">
          <Ico className="h-6 w-6 text-[#419bf9]" vb="0 0 24 24"><path d="M22 2L5 19" strokeWidth="3" /><path d="M1 11v12h12z" {...fill} /></Ico>
        </Btn>
      </div>
      <div className="mx-5 flex h-[52px] shrink-0 items-center gap-5 border-b-2 border-[#e6e6e8] pl-3.5 pt-0.5">
        <Btn label="Cut widget"><ScissorsIcon /></Btn>
        <Btn label="Copy widget"><CopyIcon /></Btn>
        <Btn label="Paste widget"><PasteIcon /></Btn>
        <Btn label="Delete widget"><DeleteIcon /></Btn>
      </div>

      <div className="h-[364px] shrink-0 pl-[30px] pt-3.5">
        <div className="flex h-10 items-center gap-2.5">
          <svg viewBox="0 0 30 28" className="h-7 w-[30px]" aria-hidden="true">
            <path d="M1 1h28v26H1z" fill="#fff" stroke="#555" strokeWidth="2" />
            <path d="M4 4h14v12H4z" fill="#3390cc" />
            <path d="M12 12h14v12H12z" fill="#b5cff3" />
          </svg>
          para
        </div>
        <ul className="ml-[14px] border-l border-[#ececef]">
          <li className="flex h-10 items-center"><span className="mr-1.5 h-px w-[19px] bg-[#ececef]" /><PageSearchIcon /><span className="ml-1.5 pl-0.5">Search</span></li>
          <li className="flex h-10 items-center"><span className="mr-1.5 h-px w-[19px] bg-[#ececef]" /><ComboIcon /><span className="ml-1.5 flex h-10 items-center bg-[#419bf9] pl-0.5 pr-1.5 text-white">Region</span></li>
          <li className="flex h-10 items-center"><span className="mr-1.5 h-px w-[19px] bg-[#ececef]" /><LabIcon /><span className="ml-1.5 pl-0.5">LabelRegion</span></li>
        </ul>
      </div>

      <div className="flex h-[74px] shrink-0 gap-0.5 pr-0.5 text-[24px]" role="tablist">
        <button type="button" role="tab" aria-selected="true" className="w-[198px] bg-[#efeff1] pr-1 pt-2">Attribute</button>
        <button type="button" role="tab" className="w-[196px] bg-[#d9dadd] pt-2">Event</button>
        <button type="button" role="tab" className="flex-1 bg-[#d9dadd] pl-5 pr-16 pt-2 text-left leading-9">Mobile Terminal</button>
      </div>

      <div className="flex min-h-0 flex-1 overflow-hidden pl-5 pt-5">
        <form className="flex min-w-0 flex-1 flex-col gap-5">
          <Section title="Basic" />
          <div className="flex items-center pl-2.5">
            <label htmlFor="wname" className="w-[200px] shrink-0">Widget Name</label>
            <input id="wname" defaultValue="Region" className={inputCls} />
          </div>
          <Check label="Available" />
          <Check label="Visible" />
          <Section title="Coords & Size" className="h-12 pt-0.5" />
          <div className="flex items-start justify-between pl-2.5">
            <span className="w-[252px] shrink-0 pt-1.5 leading-9">Widget Location</span>
            <Spin label="X Offset" value="130" />
            <span className="w-12" />
            <Spin label="Y Offset" value="25" />
          </div>
          <div className="flex items-start justify-between pl-2.5">
            <span className="w-[252px] shrink-0 pt-2 leading-9">Widget Size</span>
            <Spin label="Width" value="80" className="h-[46px]" />
            <span className="flex w-12 justify-center pt-3"><UnlockIcon className="h-[26px] w-6 text-[#333]" /></span>
            <Spin label="Height" value="21" className="h-[46px]" />
          </div>
          <Section title="Advanced" />
          <div className="flex items-center pl-2.5">
            <label htmlFor="lname" className="w-[216px] shrink-0">Label Name</label>
            <input id="lname" className={inputCls} />
          </div>
          <div className="flex items-start pl-2.5">
            <label htmlFor="wvalue" className="w-[216px] shrink-0 leading-9">Widget Value</label>
            <div className="flex min-w-0 flex-1 flex-col gap-2">
              <div className="flex h-[84px] border-2 border-[#d9dadd] bg-white pl-0.5">
                <button type="button" aria-pressed="true" className="w-[106px] shrink-0 bg-[#419bf9] pt-1.5">String</button>
                <button type="button" className="w-[106px] shrink-0 pt-1.5">Field</button>
                <button type="button" className="min-w-0 flex-1 pt-1.5">Formula</button>
              </div>
              <div className="flex"><input id="wvalue" className={inputCls} /></div>
            </div>
          </div>
          <div className="relative flex items-center pl-2.5">
            <label htmlFor="ddict" className="w-[216px] shrink-0">Data Dictionary</label>
            <input id="ddict" className={inputCls} />
            <Btn label="Edit data dictionary" className="h-10 w-11 bg-[#c9cacd]">
              <svg viewBox="0 0 20 4" className="h-1 w-5" fill="#666" aria-hidden="true"><path d="M0 0h3v3H0zM8 0h3v3H8zM16 0h3v3h-3z" /></svg>
            </Btn>
            <RedBox className="-top-0.5 right-0 h-12 w-[50px]" />
            <Badge n={3} className="right-0 top-14" />
          </div>
          <Check label="No Repeat" />
          <div className="flex items-center pl-2.5">
            <label htmlFor="ph" className="w-[216px] shrink-0">Placeholder</label>
            <input id="ph" className={inputCls} />
          </div>
          <div className="mb-5 flex items-center pl-2.5">
            <label htmlFor="Font size" className="w-[150px] shrink-0">Font Size</label>
            <Select id="Font size" value="12" className="flex-1" />
          </div>
          <Section title="Validation" />
          <Check label="Allow Null" />
        </form>
        <div className="ml-2 mr-1 mt-0.5 h-[1056px] w-4 shrink-0 rounded-md bg-[#e8e8e8]" />
      </div>

      <RedBox className="left-0 top-[464px] h-20 w-[206px]" />
      <Badge n={2} className="left-[81px] top-[402px]" />
    </aside>
  );
}

export default function App() {
  return (
    <div className="flex h-screen flex-col overflow-hidden bg-[#e0e0e2] pt-2.5 font-[Liberation_Sans,Arial,sans-serif] text-[25px] text-black">
      <div className="flex min-h-0 flex-1">
        <LeftColumn />
        <Splitter />
        <Centre />
        <SideTabs />
        <RightPanel />
      </div>
    </div>
  );
}
